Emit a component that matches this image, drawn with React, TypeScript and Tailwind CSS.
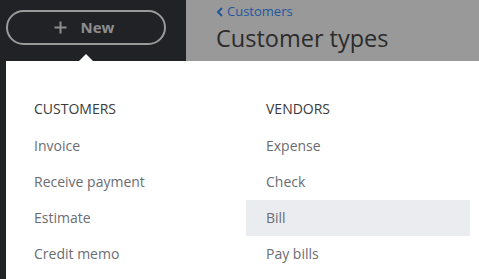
const customers = ["Invoice", "Receive payment", "Estimate", "Credit memo"];
const vendors = ["Expense", "Check", "Bill", "Pay bills"];

function MenuColumn({ title, items, active }: { title: string; items: string[]; active?: string }) {
  return (
    <div className="w-[224px]">
      <div className="px-5 h-[16px] leading-[16px] text-[14px] font-medium text-[#393a3d] mb-[11px]">
        {title}
      </div>
      <ul>
        {items.map((item) => (
          <li
            key={item}
            className={`px-5 h-[36px] leading-[36px] text-[14px] text-[#6b6c72] ${
              item === active ? "bg-[#ebecf0]" : ""
            }`}
          >
            {item}
          </li>
        ))}
      </ul>
    </div>
  );
}

export default function App() {
  return (
    <div
      className="relative w-[479px] h-[279px] bg-[#212226] overflow-hidden"
      style={{ fontFamily: "'Open Sans', Lato, sans-serif" }}
    >
      {/* Top bar */}
      <div className="flex h-[61px]">
        <div className="w-[186px] pl-[6px] pt-[10px]">
          <button className="w-[160px] h-[35px] rounded-full border-2 border-[#9a9a9a] flex items-center justify-center gap-[14px] pr-[4px] text-[#8e8e8e] font-bold text-[15px]">
            <svg width="13" height="13" viewBox="0 0 13 13">
              <path d="M6.5 0.5v12M0.5 6.5h12" stroke="#8e8e8e" strokeWidth="2" />
            </svg>
            <span>New</span>
          </button>
        </div>
        <div className="flex-1 bg-[#999999] pl-[30px] pt-[2px]">
          <div className="flex items-center gap-[3px] text-[13px] text-[#22579e]">
            <svg width="8" height="10" viewBox="0 0 8 10">
              <path d="M6 1L2 5l4 4" stroke="#22579e" strokeWidth="2" fill="none" />
            </svg>
            <span>Customers</span>
          </div>
          <div className="text-[23.5px] text-[#2b2b2b] leading-[30px] mt-[1px]">Customer types</div>
        </div>
      </div>

      {/* Dropdown */}
      <div className="relative ml-[6px] bg-white h-[218px] pt-[40px] pl-[8px] flex gap-[8px]">
        <div className="absolute left-[73px] -top-[7px] w-0 h-0 border-l-[7px] border-r-[7px] border-b-[7px] border-l-transparent border-r-transparent border-b-white" />
        <MenuColumn title="CUSTOMERS" items={customers} />
        <MenuColumn title="VENDORS" items={vendors} active="Bill" />
      </div>
    </div>
  );
}
